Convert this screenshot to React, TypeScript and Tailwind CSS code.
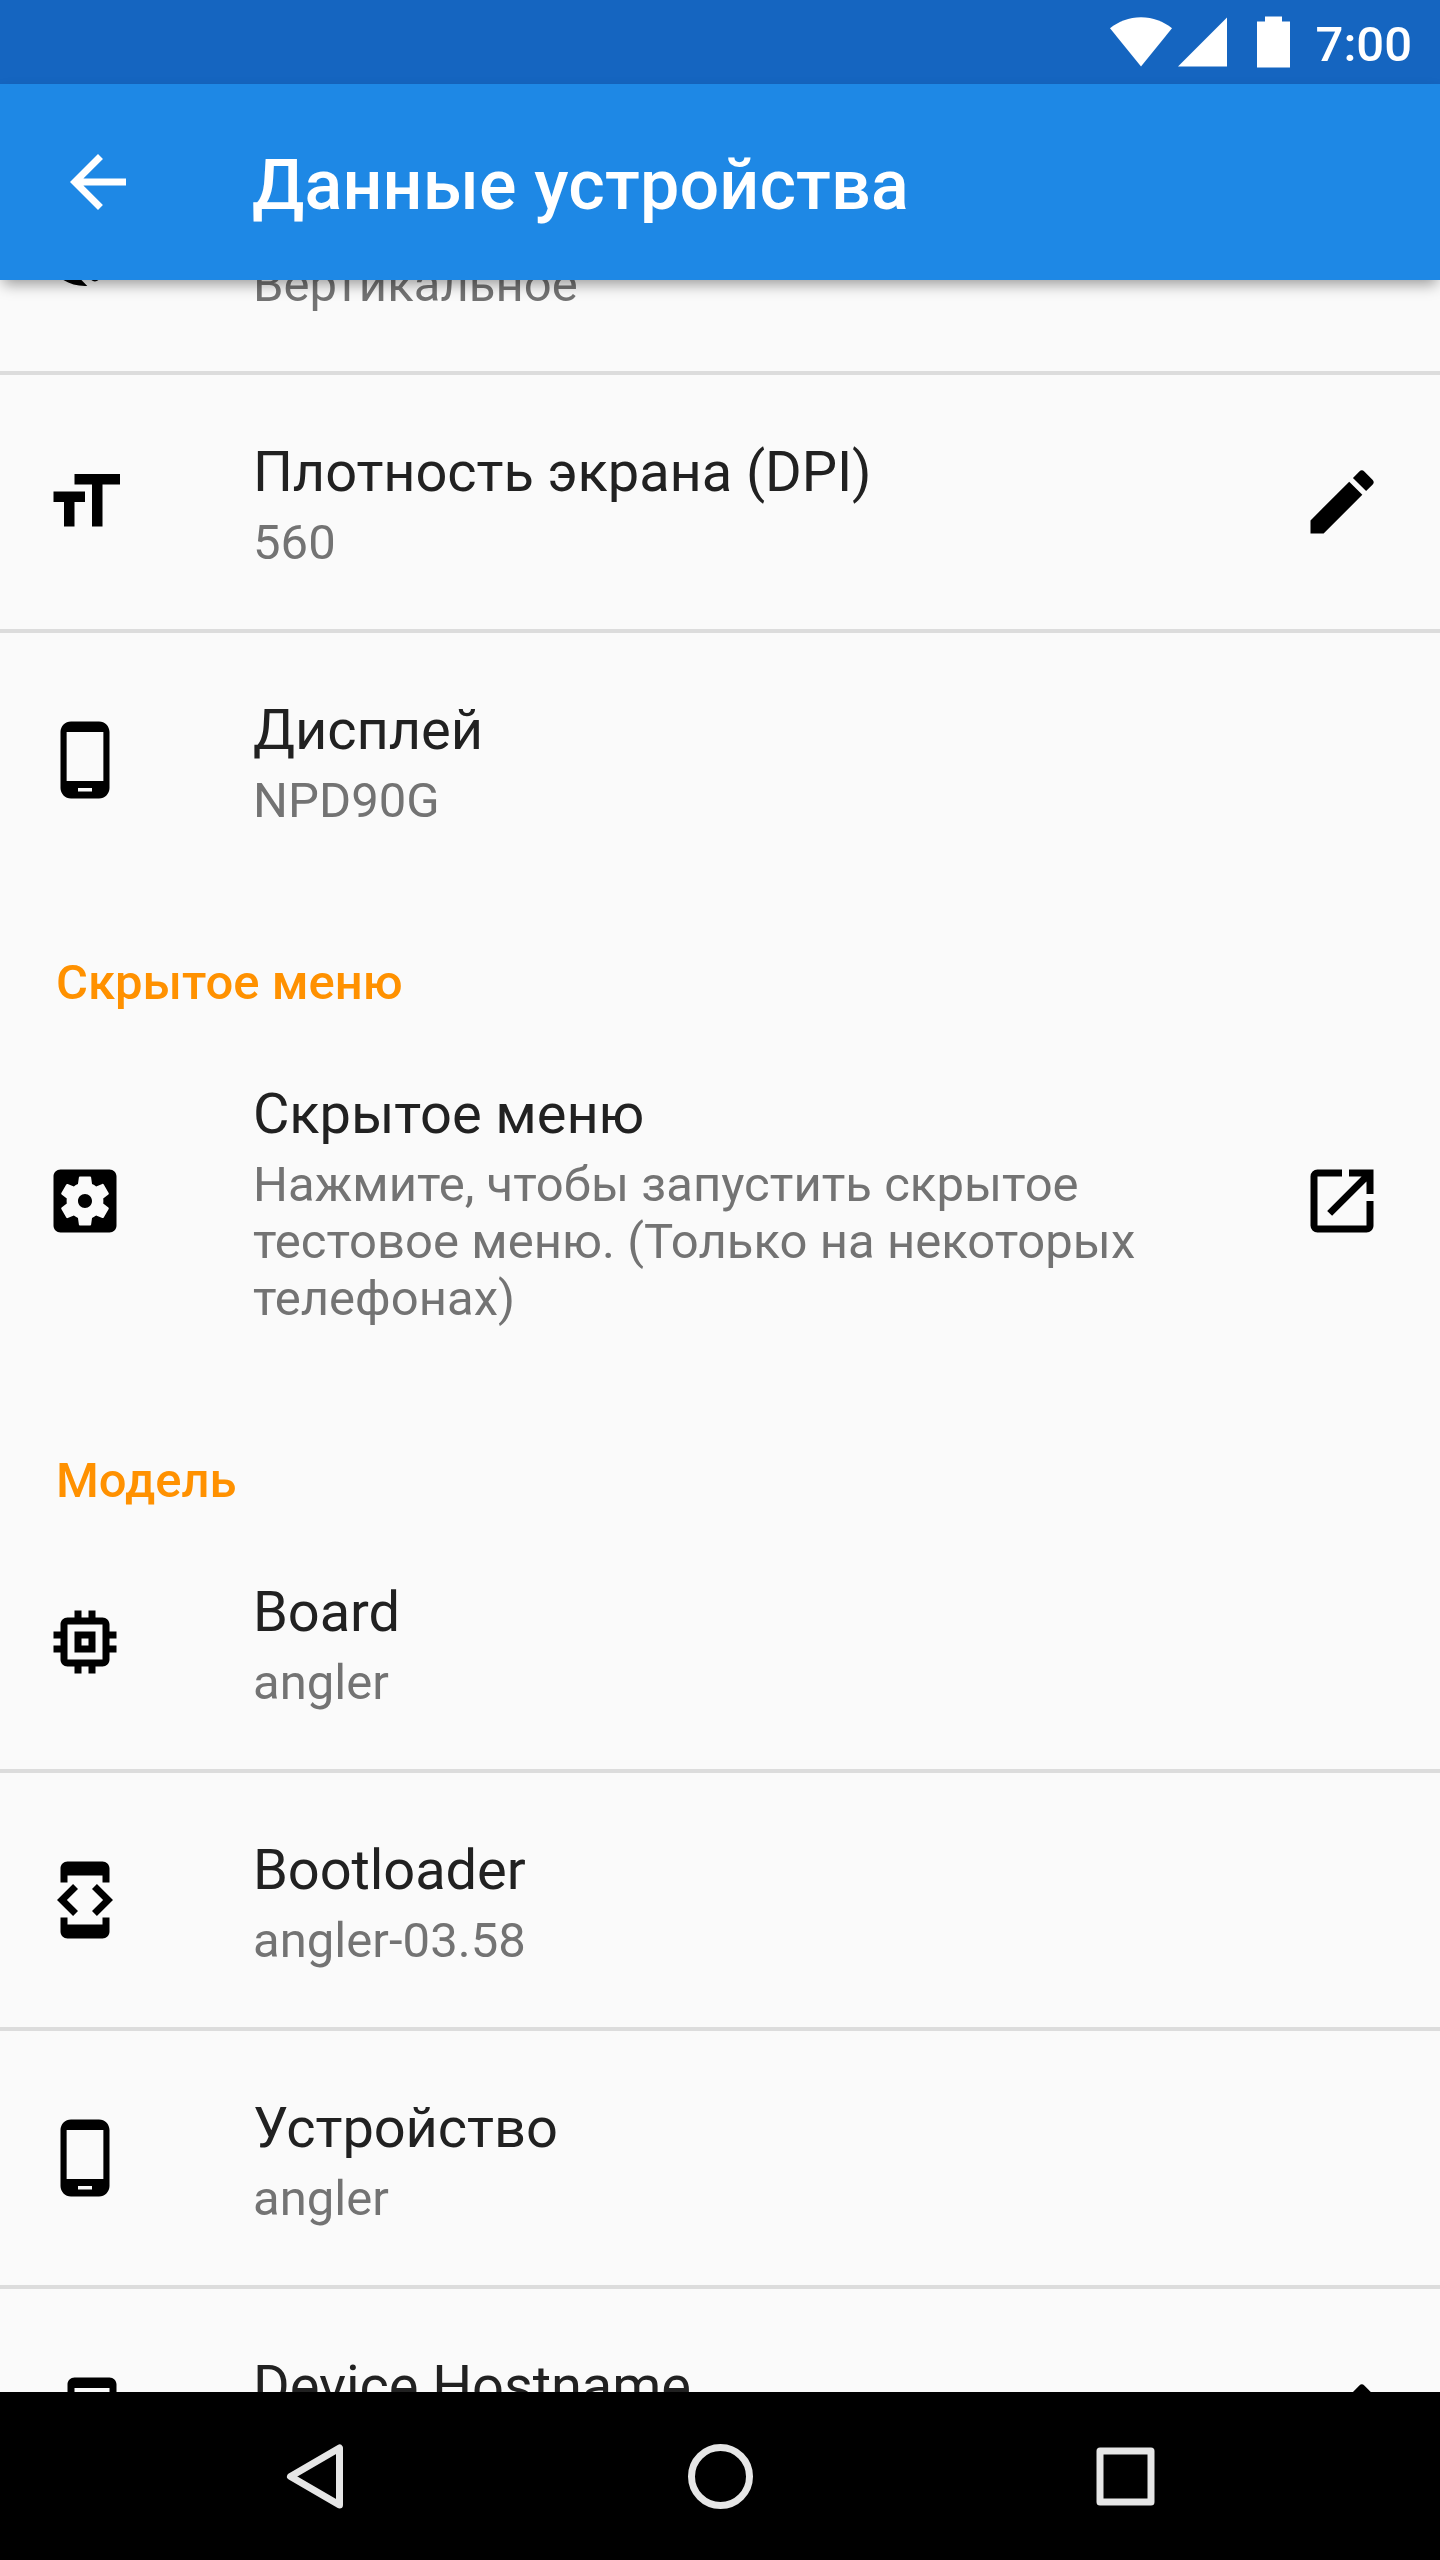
import { ReactNode } from 'react';
import {
    MdArrowBack,
    MdDeveloperMode,
    MdEdit,
    MdFormatSize,
    MdMemory,
    MdOpenInNew,
    MdPhoneAndroid,
} from 'react-icons/md';

interface RowProps {
    icon: ReactNode;
    title?: string;
    summary?: string;
    action?: ReactNode;
    divider?: boolean;
}

const ScreenRotationIcon = () => (
    <svg viewBox="0 0 24 24" width={84} height={84} fill="currentColor">
        <path d="M16.48 2.52c3.27 1.55 5.61 4.72 5.97 8.48h1.5C23.44 4.84 18.29 0 12 0l-.66.03 3.81 3.81 1.33-1.32zm-6.25-.77c-.59-.59-1.54-.59-2.12 0L1.75 8.11c-.59.59-.59 1.54 0 2.12l12.02 12.02c.59.59 1.54.59 2.12 0l6.36-6.36c.59-.59.59-1.54 0-2.12L10.23 1.75zm4.6 19.44L2.81 9.17l6.36-6.36 12.02 12.02-6.36 6.36zm-7.31.29C4.25 19.94 1.91 16.76 1.55 13H.05C.56 19.16 5.71 24 12 24l.66-.03-3.81-3.81-1.33 1.32z" />
    </svg>
);

const SettingsBoxIcon = () => (
    <svg viewBox="0 0 24 24" width={84} height={84} fill="currentColor">
        <path d="M12 10c-1.1 0-2 .9-2 2s.9 2 2 2 2-.9 2-2-.9-2-2-2zm7-7H5c-1.11 0-2 .9-2 2v14c0 1.1.89 2 2 2h14c1.11 0 2-.9 2-2V5c0-1.1-.89-2-2-2zm-1.75 9c0 .23-.02.46-.05.68l1.48 1.16c.13.11.17.3.08.45l-1.4 2.42c-.09.15-.27.21-.43.15l-1.74-.7c-.36.28-.76.51-1.18.69l-.26 1.85c-.03.17-.18.3-.35.3h-2.8c-.17 0-.32-.13-.35-.29l-.26-1.85c-.43-.18-.82-.41-1.18-.69l-1.74.7c-.16.06-.34 0-.43-.15l-1.4-2.42c-.09-.15-.05-.34.08-.45l1.48-1.16c-.03-.23-.05-.46-.05-.69 0-.23.02-.46.05-.68l-1.48-1.16c-.13-.11-.17-.3-.08-.45l1.4-2.42c.09-.15.27-.21.43-.15l1.74.7c.36-.28.76-.51 1.18-.69l.26-1.85c.03-.17.18-.3.35-.3h2.8c.17 0 .32.13.35.29l.26 1.85c.43.18.82.41 1.18.69l1.74-.7c.16-.06.34 0 .43.15l1.4 2.42c.09.15.05.34-.08.45l-1.48 1.16c.03.23.05.46.05.69z" />
    </svg>
);

const PhonelinkIcon = () => (
    <svg viewBox="0 0 24 24" width={84} height={84} fill="currentColor">
        <path d="M19 1H9c-1.1 0-2 .9-2 2v3h2V4h10v16H9v-2H7v3c0 1.1.9 2 2 2h10c1.1 0 2-.9 2-2V3c0-1.1-.9-2-2-2z" />
    </svg>
);

const StatusBar = () => (
    <div className="flex h-[84px] shrink-0 items-center justify-end bg-[#1565c0] pr-7 text-white">
        <svg width={62} height={50} viewBox="0 0 62 50" fill="currentColor">
            <path d="M31 49.5L0 11.3C8.5 4.5 19 .3 31 .3s22.5 4.2 31 11L31 49.5z" />
        </svg>
        <svg className="ml-1.5" width={49} height={50} viewBox="0 0 49 50" fill="currentColor">
            <path d="M49 .5V49.5H0z" />
        </svg>
        <svg className="ml-[30px]" width={33} height={52} viewBox="0 0 33 52" fill="currentColor">
            <path d="M8 .5h17v5h8v46H0v-46h8z" />
        </svg>
        <span className="ml-[26px] pt-1 text-[49px] leading-[57px] font-medium">7:00</span>
    </div>
);

const AppBar = () => (
    <div className="relative z-10 flex h-[196px] shrink-0 items-center bg-[#1e88e5] pl-14 text-white shadow-[0_7px_14px_-3px_rgba(0,0,0,0.4)]">
        <MdArrowBack size={84} />
        <h1 className="ml-28 pt-1.5 text-[70px] leading-[82px] font-medium tracking-[0.15px]">
            Данные устройства
        </h1>
    </div>
);

const Row = ({ icon, title, summary, action, divider }: RowProps) => (
    <div className={divider ? 'shrink-0 border-b-4 border-[#dcdcdc]' : 'shrink-0'}>
        <div className="flex items-center pr-14 pl-[43px]">
            <div className="text-black">{icon}</div>
            <div className="ml-[126px] flex-1 pt-16 pb-[58px]">
                <div className="min-h-[66px] text-[56px] leading-[66px] tracking-[-0.08px] text-[#212121]">{title}</div>
                <div className="mt-[9px] min-h-[57px] text-[49px] leading-[57px] tracking-[0.04px] text-[#737373]">
                    {summary}
                </div>
            </div>
            {action && <div className="ml-14 text-black">{action}</div>}
        </div>
    </div>
);

const SectionHeader = ({ children }: { children: ReactNode }) => (
    <div className="h-[130px] shrink-0 px-14 pt-[67px] text-[49px] leading-[57px] font-medium text-[#ff9100]">
        {children}
    </div>
);

const NavBar = () => (
    <div className="flex h-[168px] shrink-0 items-center justify-center bg-black text-[#e6e6e6]">
        <div className="flex w-[405px] justify-center">
            <svg width={70} height={70} viewBox="0 0 70 70" fill="none" stroke="currentColor" strokeWidth={7} strokeLinejoin="round">
                <path d="M59.5 7V64L10.5 35.5z" />
            </svg>
        </div>
        <div className="flex w-[405px] justify-center">
            <svg width={70} height={70} viewBox="0 0 70 70" fill="none" stroke="currentColor" strokeWidth={7}>
                <circle cx={35.5} cy={35.5} r={29} />
            </svg>
        </div>
        <div className="flex w-[405px] justify-center">
            <svg width={70} height={70} viewBox="0 0 70 70" fill="none" stroke="currentColor" strokeWidth={7} strokeLinejoin="round">
                <rect x={10} y={10} width={51} height={51} />
            </svg>
        </div>
    </div>
);

const App = () => {
    return (
        <div className="flex h-[2560px] w-[1440px] flex-col overflow-hidden bg-[#fafafa] font-['Roboto',sans-serif]">
            <StatusBar />
            <AppBar />
            <div className="flex min-h-0 flex-1 flex-col overflow-hidden">
                {/* list is scrolled, the first row sits partly under the app bar */}
                <div className="-mt-[163px] flex flex-col">
                    <Row icon={<ScreenRotationIcon />} summary="Вертикальное" divider />
                    <Row
                        icon={<MdFormatSize size={84} />}
                        title="Плотность экрана (DPI)"
                        summary="560"
                        action={<MdEdit size={84} />}
                        divider
                    />
                    <Row icon={<MdPhoneAndroid size={84} />} title="Дисплей" summary="NPD90G" />

                    <SectionHeader>Скрытое меню</SectionHeader>
                    <Row
                        icon={<SettingsBoxIcon />}
                        title="Скрытое меню"
                        summary="Нажмите, чтобы запустить скрытое тестовое меню. (Только на некоторых телефонах)"
                        action={<MdOpenInNew size={84} />}
                    />

                    <SectionHeader>Модель</SectionHeader>
                    <Row icon={<MdMemory size={84} />} title="Board" summary="angler" divider />
                    <Row icon={<MdDeveloperMode size={84} />} title="Bootloader" summary="angler-03.58" divider />
                    <Row icon={<MdPhoneAndroid size={84} />} title="Устройство" summary="angler" divider />
                    <Row icon={<PhonelinkIcon />} title="Device Hostname" action={<MdEdit size={84} />} />
                </div>
            </div>
            <NavBar />
        </div>
    );
};

export default App;
